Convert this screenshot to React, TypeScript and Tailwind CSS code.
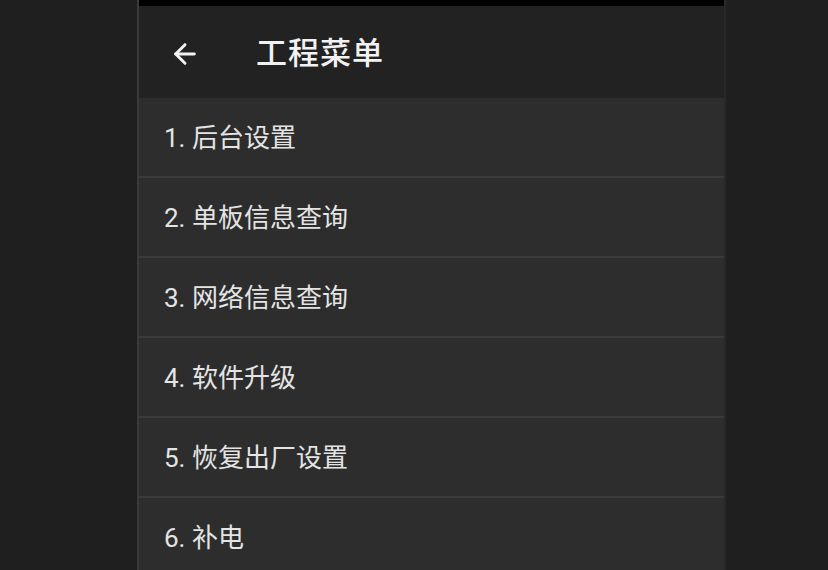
import { ArrowLeft } from "lucide-react";

const items = [
  "1. 后台设置",
  "2. 单板信息查询",
  "3. 网络信息查询",
  "4. 软件升级",
  "5. 恢复出厂设置",
  "6. 补电",
];

export default function App() {
  return (
    <div
      className="flex h-[570px] w-full overflow-hidden bg-[#1f1f1f]"
      style={{ fontFamily: '"Roboto", "Noto Sans CJK SC", sans-serif' }}
    >
      <div className="ml-[137px] flex w-[589px] shrink-0 flex-col border-x-2 border-l-[#3a3a3a] border-r-[#282828] bg-[#2d2d2d]">
        <div className="h-[6px] shrink-0 bg-black" />
        <div className="flex h-[92px] shrink-0 items-center bg-[#222222] pl-[30px] pt-[4px]">
          <ArrowLeft className="size-[32px] text-[#f2f2f2]" strokeWidth={2.2} />
          <h1 className="ml-[55px] text-[31px] font-medium tracking-[1px] text-[#f2f2f2]">
            工程菜单
          </h1>
        </div>
        {items.map((t) => (
          <div
            key={t}
            className="flex h-[80px] shrink-0 items-center border-b-2 border-[#3b3b3b] pl-[25px] pt-[3px] text-[26px] text-[#e4e4e4]"
          >
            {t}
          </div>
        ))}
      </div>
    </div>
  );
}
